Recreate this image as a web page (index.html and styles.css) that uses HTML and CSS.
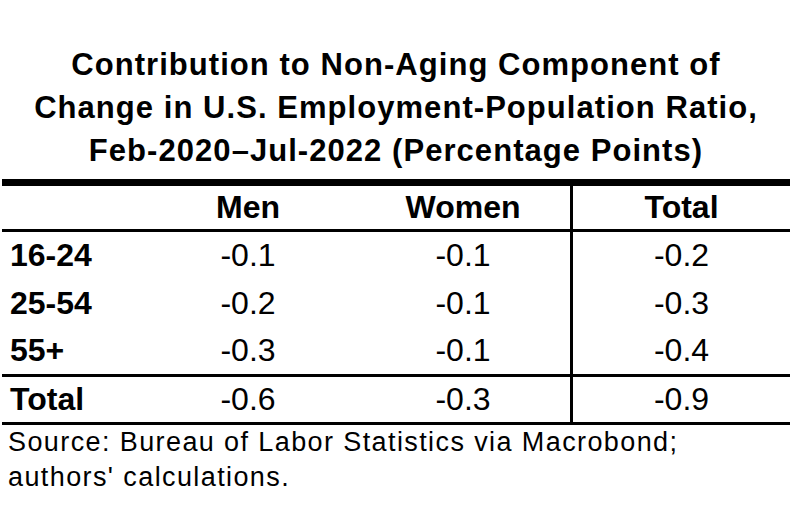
FILE: index.html
```html
<!DOCTYPE html>
<html>
<head>
<meta charset="utf-8">
<link rel="stylesheet" href="styles.css">
</head>
<body>
<div class="page">
  <h1 class="title">Contribution to Non-Aging Component of<br>Change in U.S. Employment-Population Ratio,<br>Feb-2020–Jul-2022 (Percentage Points)</h1>
  <table class="data">
    <colgroup>
      <col class="c-label">
      <col class="c-men">
      <col class="c-women">
      <col class="c-total">
    </colgroup>
    <thead>
      <tr class="head">
        <th></th>
        <th>Men</th>
        <th>Women</th>
        <th class="tot">Total</th>
      </tr>
    </thead>
    <tbody>
      <tr class="row">
        <th class="lbl">16-24</th>
        <td>-0.1</td>
        <td>-0.1</td>
        <td class="tot">-0.2</td>
      </tr>
      <tr class="row mid">
        <th class="lbl">25-54</th>
        <td>-0.2</td>
        <td>-0.1</td>
        <td class="tot">-0.3</td>
      </tr>
      <tr class="row">
        <th class="lbl">55+</th>
        <td>-0.3</td>
        <td>-0.1</td>
        <td class="tot">-0.4</td>
      </tr>
      <tr class="sum">
        <th class="lbl">Total</th>
        <td>-0.6</td>
        <td>-0.3</td>
        <td class="tot">-0.9</td>
      </tr>
    </tbody>
  </table>
  <p class="source">Source: Bureau of Labor Statistics via Macrobond;<br>authors' calculations.</p>
</div>
</body>
</html>
```

FILE: styles.css
```css
html, body {
  margin: 0;
  padding: 0;
  background: #fff;
}
body {
  font-family: "Liberation Sans", Arial, sans-serif;
  color: #000;
}
.page {
  width: 792px;
  height: 523px;
  padding: 43px 0 0 2px;
  box-sizing: border-box;
}
.title {
  margin: 0 0 7px 0;
  width: 788px;
  text-align: center;
  font-size: 31px;
  letter-spacing: 1.05px;
  line-height: 43px;
  font-weight: bold;
}
.data {
  width: 788px;
  border-collapse: separate;
  border-spacing: 0;
  table-layout: fixed;
}
.c-label { width: 138px; }
.c-men { width: 216px; }
.c-women { width: 214px; }
.c-total { width: 220px; }
.data th, .data td {
  padding: 0;
  text-align: center;
  vertical-align: middle;
  font-size: 32px;
}
.data td { font-weight: normal; }
.data th { font-weight: bold; }
.data th.lbl {
  text-align: left;
  padding-left: 8px;
}
.data .tot {
  border-left: 3px solid #000;
}
.head th {
  border-top: 7px solid #000;
  border-bottom: 3px solid #000;
  line-height: 43px;
}
.row th, .row td {
  line-height: 47px;
}
.row.mid th, .row.mid td {
  line-height: 48px;
}
.sum th, .sum td {
  border-top: 3px solid #000;
  border-bottom: 3px solid #000;
  line-height: 45px;
}
.source {
  margin: 0;
  padding-left: 6px;
  font-size: 27px;
  letter-spacing: 1.4px;
  line-height: 35px;
}
```
